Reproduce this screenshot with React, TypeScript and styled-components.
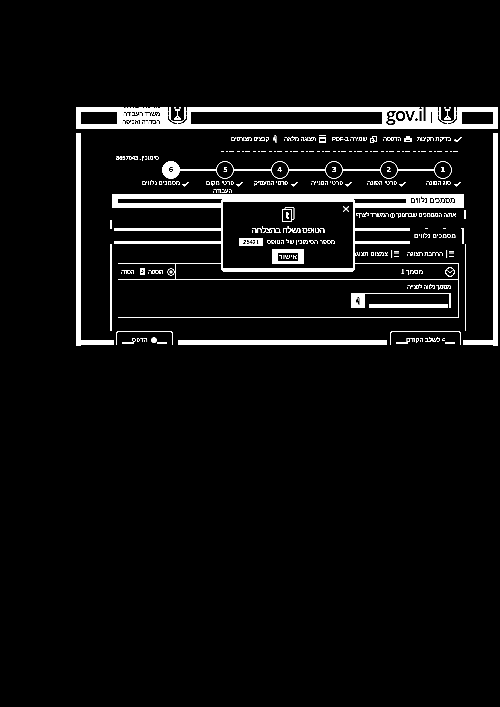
import React, { useLayoutEffect, useRef, useState } from "react";
import styled, { createGlobalStyle } from "styled-components";

const Global = createGlobalStyle`
  * { box-sizing: border-box; }
  html, body { margin: 0; background: #000; }
  body { width: 500px; height: 707px; overflow: hidden; font-family: "Liberation Sans", Arial, sans-serif; color: #fff; }
  svg { display: block; flex: none; }
`;

const Page = styled.main`
  width: 500px;
  height: 707px;
  padding: 107px 0 0 76px;
  background: #000;
  filter: brightness(1.05) contrast(5);
`;
const Window = styled.section`
  position: relative;
  width: 422px;
  height: 239px;
  display: flex;
  flex-direction: column;
`;
const Header = styled.header`
  height: 22px;
  flex: none;
  background: #fff;
  color: #000;
  display: flex;
  align-items: flex-start;
  overflow: hidden;
  padding-left: 5px;
`;
const HeaderBar = styled.div<{ $w: number }>`
  width: ${(p) => p.$w}px;
  height: 12px;
  margin-top: 5px;
  flex: none;
  background: #000;
`;
const Ministry = styled.div`
  width: 50px;
  flex: none;
  display: flex;
  flex-direction: column;
  align-items: flex-end;
  margin-top: -5px;
  padding-right: 7px;
`;
const Brand = styled.div`
  width: 80px;
  flex: none;
  display: flex;
  align-items: flex-start;
  padding-left: 4px;
`;
const Wordmark = styled.span`
  width: 43px;
  height: 22px;
  flex: none;
  font: 600 18px/22px "Open Sans", sans-serif;
  letter-spacing: -0.9px;
  margin-top: -4px;
`;
const Divider = styled.i`
  width: 1px;
  height: 11px;
  margin: 5px 5px 0 2px;
  background: #000;
`;
const Body = styled.div`
  margin-top: 4px;
  height: 213px;
  border: solid #fff;
  border-width: 0 5px;
  display: flex;
  flex-direction: column;
`;
const Row = styled.div<{ $h: number; $left?: number }>`
  height: ${(p) => p.$h}px;
  flex: none;
  display: flex;
  align-items: center;
  padding-left: ${(p) => p.$left ?? 0}px;
`;
const Slot = styled.div<{ $l?: number; $w?: number }>`
  margin-left: ${(p) => p.$l ?? 0}px;
  ${(p) => (p.$w ? `width: ${p.$w}px;` : "")}
  flex: none;
  display: flex;
  align-items: center;
`;
const Tick = styled.i<{ $l: number }>`
  width: 2px;
  height: 9px;
  flex: none;
  margin-left: ${(p) => p.$l}px;
  background: #fff;
`;
const TextBox = styled.span<{ $w: number; $size: number; $bold?: boolean }>`
  width: ${(p) => p.$w}px;
  flex: none;
  display: block;
  white-space: nowrap;
  direction: rtl;
  font-size: ${(p) => p.$size}px;
  line-height: 8px;
  font-weight: ${(p) => (p.$bold ? 700 : 400)};
`;
const Dashes = styled.div`
  width: 240px;
  height: 1px;
  background: repeating-linear-gradient(90deg, #fff 0 3px, #000 3px 5px, #fff 5px 7px, #000 7px 8px, #fff 8px 13px, #000 13px 16px);
`;
const Steps = styled.div`
  height: 18px;
  flex: none;
  display: flex;
  align-items: center;
  padding-left: 81px;
`;
const Circle = styled.div<{ $on?: boolean }>`
  width: 18px;
  height: 18px;
  flex: none;
  border: 1px solid #fff;
  border-radius: 50%;
  background: ${(p) => (p.$on ? "#fff" : "#000")};
  color: ${(p) => (p.$on ? "#000" : "#fff")};
  font: 700 7px/17px "DejaVu Sans", sans-serif;
  text-align: center;
`;
const Connector = styled.i`
  width: 36.4px;
  height: 2px;
  flex: none;
  background: #fff;
`;
const TitleBar = styled.div`
  width: 352px;
  height: 14px;
  flex: none;
  margin-left: 31px;
  background: #fff;
  color: #000;
  display: flex;
  align-items: center;
  padding-left: 6px;
`;
const TitleStrip = styled.i`
  width: 288px;
  height: 4px;
  background: #000;
`;
const Section = styled.div`
  height: 16px;
  width: 352px;
  flex: none;
  margin-left: 31px;
  border-right: 2px solid #fff;
  display: flex;
  align-items: stretch;
`;
const SectionLines = styled.i`
  width: 298px;
  margin-left: 2px;
  border: solid #fff;
  border-width: 3px 0;
`;
const SectionTitle = styled.div`
  padding: 0 6px 0 4px;
  display: flex;
  align-items: center;
  background: repeating-linear-gradient(90deg, #000 0 15px, #fff 15px 18px) top / 100% 1px no-repeat;
`;
const Frame = styled.div`
  width: 356px;
  height: 87px;
  flex: none;
  margin-left: 29px;
  border: solid #fff;
  border-width: 0 1px 0 2px;
  padding: 0 6px;
`;
const Card = styled.div`
  width: 341px;
  height: 55px;
  border: 1px solid #fff;
  border-left: 0;
`;
const CardHead = styled.div`
  height: 16px;
  border-bottom: 1px solid #fff;
  display: flex;
  align-items: center;
`;
const Actions = styled.div`
  width: 58px;
  height: 15px;
  padding-left: 3px;
  border-right: 1px solid #fff;
  display: flex;
  align-items: center;
`;
const FieldRow = styled.div`
  display: flex;
  padding-left: 233px;
  margin-top: -1px;
  height: 15px;
`;
const Attach = styled.div`
  width: 14px;
  background: #fff;
  display: grid;
  place-items: center;
`;
const Field = styled.div`
  width: 86px;
  border: solid #fff;
  border-width: 1px 2px 0 0;
  padding: 10px 1px 0 4px;
  &::after { content: ""; display: block; height: 4px; background: #fff; }
`;
const Footer = styled.footer`
  height: 14px;
  flex: none;
  display: flex;
  align-items: flex-end;
`;
const Base = styled.i<{ $w: number }>`
  width: ${(p) => p.$w}px;
  height: 5px;
  flex: none;
  background: #fff;
`;
const FootButton = styled.button<{ $w: number; $pad: number }>`
  width: ${(p) => p.$w}px;
  height: 14px;
  flex: none;
  margin: 0;
  padding: 2px 0 0 ${(p) => p.$pad}px;
  border: 1px solid #fff;
  border-bottom: 0;
  border-radius: 3px 3px 0 0;
  background:
    linear-gradient(#fff, #fff) 5px 10px / 12px 2px no-repeat,
    linear-gradient(#fff, #fff) calc(100% - 5px) 10px / 10px 2px no-repeat,
    #000;
  color: #fff;
  display: flex;
  align-items: center;
`;
const Dialog = styled.div`
  position: absolute;
  left: 145px;
  top: 92px;
  width: 134px;
  height: 73px;
  background: #000;
  border: solid #fff;
  border-width: 3px 2px 4px;
  border-radius: 2px 2px 4px 4px;
`;
const Close = styled.div`
  position: absolute;
  right: 4px;
  top: 4px;
`;
const DialogBody = styled.div`
  display: flex;
  flex-direction: column;
  align-items: center;
  padding-top: 5px;
`;
const Heading = styled.div`
  padding-top: 4px;
`;
const Reference = styled.div`
  display: flex;
  align-items: center;
  height: 8px;
  margin: 4px 0 3px -2px;
`;
const Code = styled.span`
  width: 24px;
  height: 8px;
  background: #fff;
  color: #000;
  padding-left: 4px;
  margin-right: 2px;
`;
const Confirm = styled.button`
  width: 32px;
  height: 15px;
  margin: 0;
  padding: 0;
  border: 0;
  background: #fff;
  color: #fff;
  display: grid;
  place-items: center;
`;
const ConfirmText = styled.span`
  width: 20px;
  height: 8px;
  padding-left: 1px;
  background: #000;
`;

/* Spreads the letters so that the caption fills its column. */
function Label({ w, size = 6, bold, children }: { w: number; size?: number; bold?: boolean; children: string }) {
  const ref = useRef<HTMLSpanElement>(null);
  const [spacing, setSpacing] = useState(0);
  useLayoutEffect(() => {
    const range = document.createRange();
    range.selectNodeContents(ref.current!);
    setSpacing((w - range.getBoundingClientRect().width) / children.length);
  }, []);
  return (
    <TextBox ref={ref} $w={w} $size={size} $bold={bold} style={{ letterSpacing: spacing }}>
      {children}
    </TextBox>
  );
}

const Emblem = () => (
  <svg width="21" height="18" viewBox="0 0 21 18" fill="none" stroke="#000">
    <path d="M1.5 0v11q1 4.5 9 6q8-1.5 9-6V0" strokeWidth="1.3" strokeDasharray="4 .5" />
    <path d="M4 0v12.5q1 1.5 6.5 1.5t6.500-1.5V0z" fill="#000" stroke="none" />
    <path d="M7 .8h2M12 .8h2M8 3h5M10.5 2v7M8 12.3l2.5-3.8l2.5 3.8M6.5 12h8" stroke="#fff" strokeWidth="1.4" />
  </svg>
);
const Check = ({ s = 7 }: { s?: number }) => (
  <svg width={s} height={s} viewBox="0 0 8 8" fill="none" stroke="#fff" strokeWidth="1.8"><path d="M.5 4.5L3 6.5L7.5 2" /></svg>
);
const Printer = () => (
  <svg width="8" height="8" viewBox="0 0 8 8" fill="#fff"><path d="M2 1h4v2h2v4H6V5H2v2H0V3h2zM2 6h4v1H2z" /></svg>
);
const Save = () => (
  <svg width="7" height="7" viewBox="0 0 7 7" fill="none" stroke="#fff"><path d="M2.5 2V.5h4v5h-2M.5 2.5h3v4h-3zM2 4.5h3" /></svg>
);
const View = () => (
  <svg width="7" height="8" viewBox="0 0 7 8"><path d="M0 .5h7M0 2.5h7" stroke="#fff" /><path d="M.5 3.5h6v4h-6z" fill="none" stroke="#fff" /><path d="M0 6.5h7" stroke="#fff" /></svg>
);
const Clip = ({ c = "#fff" }: { c?: string }) => (
  <svg width="4" height="8" viewBox="0 0 4 8" fill="none" stroke={c}><path d="M.5 2.5v3M1.5 5.5V1.5M1.5 .5h1.5M3 1v7M2.5 4v3" /></svg>
);
const ListIcon = () => (
  <svg width="8" height="8" viewBox="0 0 8 8" stroke="#fff"><path d="M.8 0v8M3 1.5h5M3 3h5M3 6.5h5" strokeWidth="1.2" /></svg>
);
const Ring = ({ s, d, fill = "none" }: { s: number; d: string; fill?: string }) => (
  <svg width={s} height={s} viewBox="0 0 10 10" fill="none" stroke="#fff" strokeWidth="1.2"><circle cx="5" cy="5" r="4.3" fill={fill} /><path d={d} /></svg>
);
const Box = () => (
  <svg width="5" height="7" viewBox="0 0 5 7"><path fill="#fff" d="M0 0h5v7H0z" /><path d="M2 2.5h1v2H1" fill="none" stroke="#000" /></svg>
);
const Copies = () => (
  <svg width="13" height="15" viewBox="0 0 13 15" fill="none" stroke="#fff"><path d="M3 2.5V.5h9v12h-2M.5 2.5h9v12h-9z" /><path d="M5 5v6M4 7h3M5 11h2" strokeWidth="1.3" /></svg>
);

const steps = [6, 5, 4, 3, 2, 1];

export default function App() {
  return (
    <>
      <Global />
      <Page>
        <Window>
          <Header>
            <HeaderBar $w={36} />
            <Ministry>
              <Label w={37} size={7} bold>מדינת ישראל</Label>
              <Label w={37} size={6.5} bold>משרד העבודה</Label>
              <Label w={38} size={6.5} bold>הסדרה ואכיפה</Label>
            </Ministry>
            <Slot $w={24}><Emblem /></Slot>
            <HeaderBar $w={191} />
            <Brand>
              <Wordmark>gov.il</Wordmark>
              <Divider />
              <Emblem />
            </Brand>
            <HeaderBar $w={31} />
          </Header>
          <Body>
            <Row $h={12} $left={150}>
              <Label w={38} bold>קבצים מצורפים</Label>
              <Slot $l={4}><Clip /></Slot>
              <Slot $l={7}><Label w={32} bold>תצוגה מלאה</Label></Slot>
              <Slot $l={3}><View /></Slot>
              <Slot $l={6}><Label w={35} bold>שמירה ב-PDF</Label></Slot>
              <Slot $l={3}><Save /></Slot>
              <Slot $l={6}><Label w={18} bold>הדפסה</Label></Slot>
              <Slot $l={3}><Printer /></Slot>
              <Slot $l={5}><Label w={34} bold>בדיקת תקינות</Label></Slot>
              <Slot $l={3}><Check s={8} /></Slot>
            </Row>
            <Row $h={13} $left={140}><Dashes /></Row>
            <Row $h={0} $left={35}><Label w={43} bold>סימוכין..8657043</Label></Row>
            <Row $h={3} />
            <Steps>
              {steps.map((n, i) => (
                <React.Fragment key={n}>
                  {i > 0 && <Connector />}
                  <Circle $on={n === 6}>{n}</Circle>
                </React.Fragment>
              ))}
            </Steps>
            <Row $h={8} $left={61}>
              <Label w={38} bold>מסמכים נלווים</Label>
              <Slot $l={2}><Check /></Slot>
              <Slot $l={17}><Label w={28} bold>פרטי מקום</Label></Slot>
              <Slot $l={2}><Check /></Slot>
              <Slot $l={11}><Label w={34} bold>פרטי המעסיק</Label></Slot>
              <Slot $l={3}><Check /></Slot>
              <Slot $l={13}><Label w={32} bold>פרטי הפנייה</Label></Slot>
              <Slot $l={2}><Check /></Slot>
              <Slot $l={15}><Label w={30} bold>פרטי הפונה</Label></Slot>
              <Slot $l={2}><Check /></Slot>
              <Slot $l={20}><Label w={25} bold>סוג הפונה</Label></Slot>
              <Slot $l={3}><Check /></Slot>
            </Row>
            <Row $h={7} $left={132}><Label w={19} bold>העבודה</Label></Row>
            <TitleBar>
              <TitleStrip />
              <Slot $l={4}><Label w={45} size={7.5} bold>מסמכים נלווים</Label></Slot>
            </TitleBar>
            <Row $h={13} $left={275}><Label w={100} bold>את/ה המסמכים שברצונך (ן) המשרד לצרף</Label><Tick $l={8} /></Row>
            <Row $h={7} $left={29}><Tick $l={0} /></Row>
            <Section>
              <SectionLines />
              <SectionTitle><Label w={42} size={6.5} bold>מסמכים נלווים</Label></SectionTitle>
            </Section>
            <Frame>
              <Row $h={19} $left={234}>
                <Label w={36} bold>צמצום תצוגה</Label>
                <Slot $l={3}><ListIcon /></Slot>
                <Slot $l={8}><Label w={36} bold>הרחבת תצוגה</Label></Slot>
                <Slot $l={3}><ListIcon /></Slot>
              </Row>
              <Card>
                <CardHead>
                  <Actions>
                    <Label w={13} bold>הסרה</Label>
                    <Slot $l={6}><Box /></Slot>
                    <Slot $l={3}><Label w={15} bold>הוספה</Label></Slot>
                    <Slot $l={4}><Ring s={8} d="M5 2v6M2 5h6" /></Slot>
                  </Actions>
                  <Slot $l={225}><Label w={22} size={6.5} bold>מסמך 1</Label></Slot>
                  <Slot $l={22}><Ring s={10} d="M2.5 3.5L5 6l2.5-2.5" /></Slot>
                </CardHead>
                <Row $h={14} $left={289}><Label w={44} bold>מסמך נלווה לפנייה</Label></Row>
                <FieldRow>
                  <Attach><Clip c="#000" /></Attach>
                  <Field />
                </FieldRow>
              </Card>
            </Frame>
            <Footer>
              <Base $w={33} />
              <Slot $l={2} />
              <FootButton $w={57} $pad={15}>
                <Label w={16} bold>הדפס</Label>
                <Slot $l={3}><Ring s={6} d="M2 4h6M2 6h6M4 2v6" fill="#fff" /></Slot>
              </FootButton>
              <Slot $l={5} />
              <Base $w={209} />
              <Slot $l={3} />
              <FootButton $w={71} $pad={15}><Label w={39} size={6.5} bold>{"> לשלב הקודם"}</Label></FootButton>
              <Slot $l={2} />
              <Base $w={30} />
            </Footer>
          </Body>
          <Dialog>
            <Close><svg width="6" height="6" viewBox="0 0 6 6" stroke="#fff" strokeWidth="1.3"><path d="M0 0l6 6M6 0L0 6" /></svg></Close>
            <DialogBody>
              <Copies />
              <Heading><Label w={73} size={8.5} bold>הטופס נשלח בהצלחה</Label></Heading>
              <Reference>
                <Code><Label w={16} bold>25421</Label></Code>
                <Label w={70} bold>מספר הסימוכין של הטופס:</Label>
              </Reference>
              <Confirm><ConfirmText><Label w={18} size={6.5} bold>אישור</Label></ConfirmText></Confirm>
            </DialogBody>
          </Dialog>
        </Window>
      </Page>
    </>
  );
}
